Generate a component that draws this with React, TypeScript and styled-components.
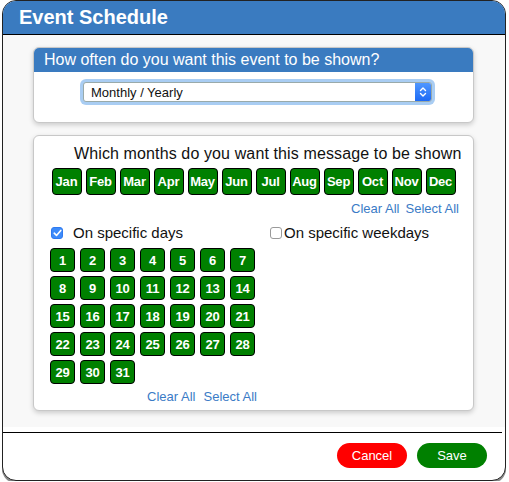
import React, { useState } from "react";
import styled, { createGlobalStyle } from "styled-components";

const Global = createGlobalStyle`
  html, body { margin: 0; padding: 0; background: #ffffff; }
  body { font-family: "Liberation Sans", Arial, sans-serif; }
  * { box-sizing: border-box; }
`;

const BLUE = "#3a7bc0";
const GREEN = "#008000";

const Dialog = styled.div`
  margin-left: 2px;
  width: 504px;
  height: 481px;
  border: 1px solid #222;
  border-radius: 14px;
  overflow: hidden;
  background: #fff;
  display: flex;
  flex-direction: column;
  box-shadow: 0 2px 0 #888;
`;

const Header = styled.div`
  height: 34px;
  flex: none;
  background: ${BLUE};
  border-bottom: 1px solid #000;
  color: #fff;
  font-weight: bold;
  font-size: 20px;
  padding-left: 16px;
  display: flex;
  align-items: center;
  padding-bottom: 1px;
`;

const Body = styled.div`
  background: #f8f8f8;
  padding: 12px 31px 16px 30px;
  display: flex;
  flex-direction: column;
  gap: 12px;
`;

const Card = styled.div`
  background: #fff;
  border: 1px solid #c8c8c8;
  border-radius: 6px;
  box-shadow: 0 2px 5px rgba(0, 0, 0, 0.18);
  overflow: hidden;
`;

const CardHeader = styled.div`
  background: ${BLUE};
  color: #fff;
  font-size: 16px;
  height: 24px;
  display: flex;
  align-items: center;
  padding-left: 10px;
`;

const SelectArea = styled.div`
  padding: 7px 0 17px 46px;
`;

const SelectRing = styled.div`
  width: 355px;
  height: 26px;
  padding: 3px;
  border-radius: 6px;
  background: #a9cdf3;
`;

const SelectBox = styled.div`
  height: 20px;
  background: #fff;
  border-radius: 3px;
  border: 1px solid #9aa;
  display: flex;
  align-items: center;
  overflow: hidden;
  font-size: 13px;
  color: #111;
`;

const SelectText = styled.span`
  flex: 1;
  padding-left: 7px;
`;

const Stepper = styled.span`
  width: 16px;
  height: 100%;
  background: linear-gradient(#4f97ff, #1d6af5);
  display: flex;
  align-items: center;
  justify-content: center;
`;

const Card2Body = styled.div`
  padding: 9px 17px 5px 17px;
  display: flex;
  flex-direction: column;
`;

const Question = styled.div`
  font-size: 16px;
  color: #111;
  line-height: 18px;
  padding-left: 23px;
  letter-spacing: 0.12px;
  white-space: nowrap;
`;

const MonthRow = styled.div`
  display: flex;
  gap: 4px;
  justify-content: center;
  margin-top: 5px;
`;

const Tile = styled.button<{ $w: number; $h: number }>`
  width: ${(p) => p.$w}px;
  height: ${(p) => p.$h}px;
  background: ${GREEN};
  border: 1px solid #000;
  border-radius: 4px;
  color: #fff;
  font-family: "Liberation Sans", Arial, sans-serif;
  font-weight: bold;
  font-size: 13px;
  padding: 0;
  display: flex;
  align-items: center;
  justify-content: center;
  cursor: pointer;
  letter-spacing: -0.2px;
`;

const Links = styled.div<{ $align: string }>`
  display: flex;
  justify-content: ${(p) => p.$align};
  gap: 6px;
  font-size: 13px;
  line-height: 16px;
`;

const MonthLinks = styled(Links)`
  margin-top: 6px;
  margin-right: -3px;
`;

const LinkText = styled.a`
  color: #3a7bc6;
  cursor: pointer;
`;

const Columns = styled.div`
  display: flex;
  margin-top: 7px;
`;

const DaysCol = styled.div`
  width: 219px;
  display: flex;
  flex-direction: column;
`;

const CheckRow = styled.label<{ $gap: number }>`
  display: flex;
  align-items: center;
  align-self: flex-start;
  gap: ${(p) => p.$gap}px;
  font-size: 15px;
  color: #111;
  line-height: 18px;
`;

const Box = styled.span<{ $on: boolean }>`
  width: 12px;
  height: 12px;
  border-radius: 3px;
  flex: none;
  display: flex;
  align-items: center;
  justify-content: center;
  background: ${(p) => (p.$on ? "#3d8bfa" : "#fff")};
  border: 1px solid ${(p) => (p.$on ? "#2f7af0" : "#9a9a9a")};
`;

const DayGrid = styled.div`
  display: grid;
  grid-template-columns: repeat(7, 25px);
  column-gap: 5px;
  row-gap: 4px;
  margin-top: 6px;
  margin-left: -1px;
`;

const DayLinks = styled(Links)`
  width: 206px;
  margin-top: 5px;
  gap: 8px;
`;

const Divider = styled.div`
  height: 1px;
  background: #000;
  margin: 5px 3px 0 0;
`;

const Footer = styled.div`
  flex: 1;
  display: flex;
  justify-content: flex-end;
  align-items: flex-start;
  gap: 10px;
  padding: 10px 18px 0 0;
`;

const Pill = styled.button<{ $bg: string }>`
  width: 70px;
  height: 25px;
  border-radius: 13px;
  border: none;
  background: ${(p) => p.$bg};
  color: #fff;
  font-family: "Liberation Sans", Arial, sans-serif;
  font-size: 13px;
  cursor: pointer;
`;

const months = ["Jan", "Feb", "Mar", "Apr", "May", "Jun", "Jul", "Aug", "Sep", "Oct", "Nov", "Dec"];
const days = Array.from({ length: 31 }, (_, i) => i + 1);

export default function App() {
  const [specificDays] = useState(true);
  return (
    <>
      <Global />
      <Dialog>
        <Header>Event Schedule</Header>
        <Body>
          <Card>
            <CardHeader>How often do you want this event to be shown?</CardHeader>
            <SelectArea>
              <SelectRing>
                <SelectBox>
                  <SelectText>Monthly / Yearly</SelectText>
                  <Stepper>
                    <svg width="8" height="12" viewBox="0 0 8 12" fill="none" stroke="#fff" strokeWidth="1.4" strokeLinecap="round" strokeLinejoin="round">
                      <path d="M1.5 4.5 L4 2 L6.5 4.5" />
                      <path d="M1.5 7.5 L4 10 L6.5 7.5" />
                    </svg>
                  </Stepper>
                </SelectBox>
              </SelectRing>
            </SelectArea>
          </Card>
          <Card>
            <Card2Body>
              <Question>Which months do you want this message to be shown</Question>
              <MonthRow>
                {months.map((m) => (
                  <Tile key={m} $w={30} $h={27}>{m}</Tile>
                ))}
              </MonthRow>
              <MonthLinks $align="flex-end">
                <LinkText>Clear All</LinkText>
                <LinkText>Select All</LinkText>
              </MonthLinks>
              <Columns>
                <DaysCol>
                  <CheckRow $gap={10}>
                    <Box $on={specificDays}>
                      <svg width="9" height="8" viewBox="0 0 9 8" fill="none" stroke="#fff" strokeWidth="1.6" strokeLinecap="round" strokeLinejoin="round">
                        <path d="M1.2 4.2 L3.5 6.4 L7.8 1.4" />
                      </svg>
                    </Box>
                    On specific days
                  </CheckRow>
                  <DayGrid>
                    {days.map((d) => (
                      <Tile key={d} $w={25} $h={24}>{d}</Tile>
                    ))}
                  </DayGrid>
                  <DayLinks $align="flex-end">
                    <LinkText>Clear All</LinkText>
                    <LinkText>Select All</LinkText>
                  </DayLinks>
                </DaysCol>
                <CheckRow $gap={2}>
                  <Box $on={false} />
                  On specific weekdays
                </CheckRow>
              </Columns>
            </Card2Body>
          </Card>
        </Body>
        <Divider />
        <Footer>
          <Pill $bg="#ff0000">Cancel</Pill>
          <Pill $bg={GREEN}>Save</Pill>
        </Footer>
      </Dialog>
    </>
  );
}
